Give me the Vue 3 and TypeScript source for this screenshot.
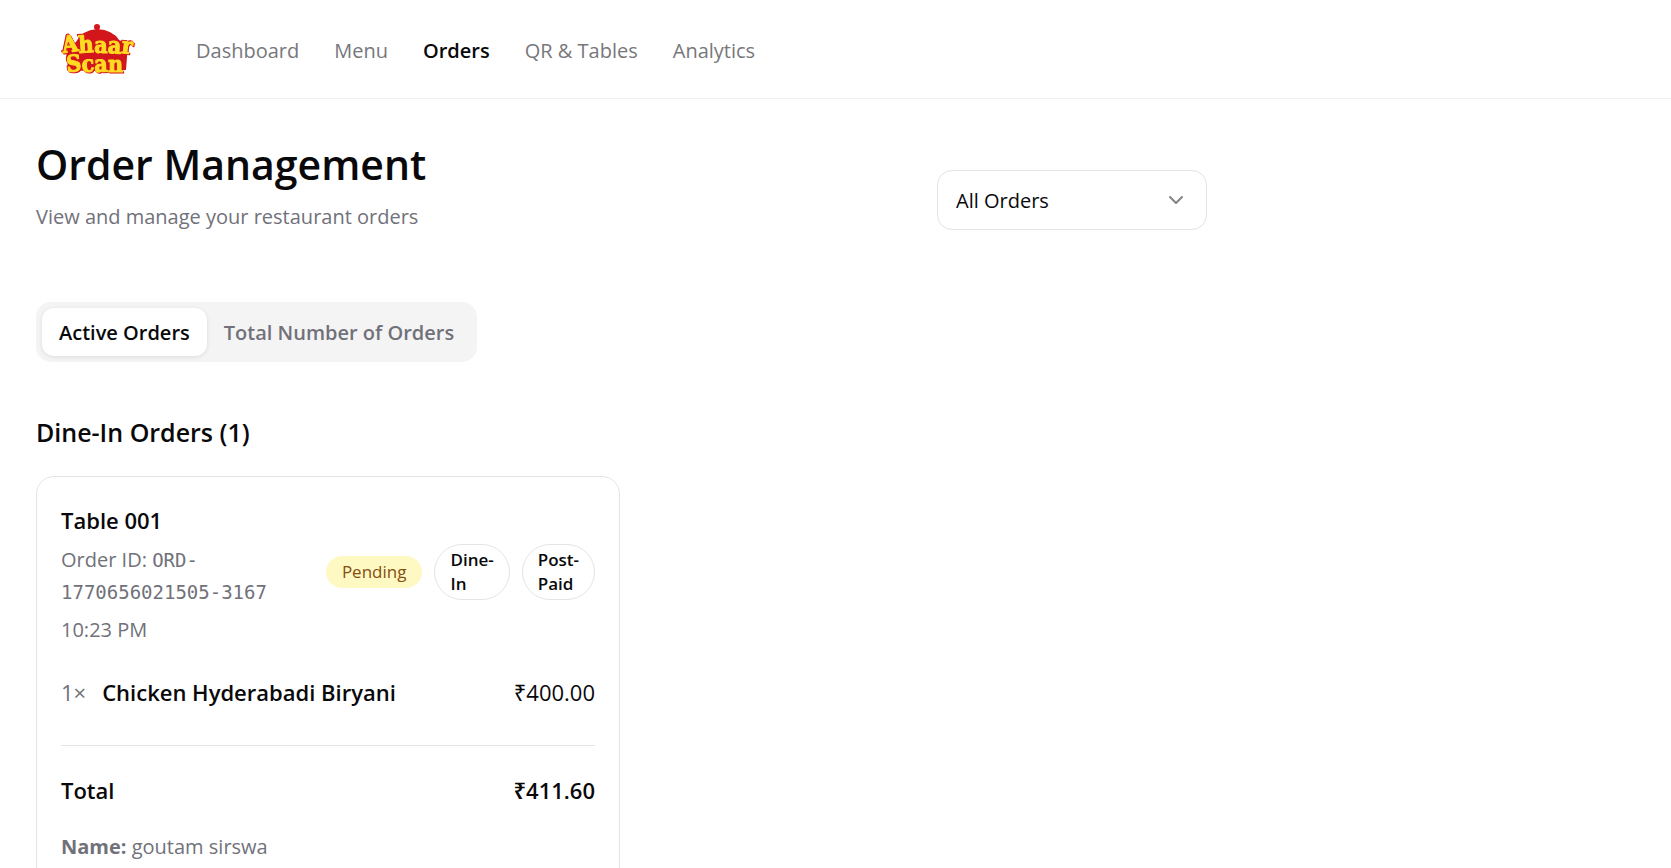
<script setup lang="ts">
import { ref } from 'vue'

interface NavItem {
  label: string
  href: string
}

interface OrderLine {
  quantity: number
  name: string
  price: number
}

const navItems: NavItem[] = [
  { label: 'Dashboard', href: '#dashboard' },
  { label: 'Menu', href: '#menu' },
  { label: 'Orders', href: '#orders' },
  { label: 'QR & Tables', href: '#tables' },
  { label: 'Analytics', href: '#analytics' },
]
const currentPage = 'Orders'

const tabs: string[] = ['Active Orders', 'Total Number of Orders']
const activeTab = ref(tabs[0])

const filters: string[] = ['All Orders', 'Dine-In', 'Takeaway']
const filter = ref(filters[0])

const order = {
  table: 'Table 001',
  id: 'ORD-1770656021505-3167',
  time: '10:23 PM',
  status: 'Pending',
  tags: ['Dine-In', 'Post-Paid'],
  lines: [{ quantity: 1, name: 'Chicken Hyderabadi Biryani', price: 400 }] as OrderLine[],
  total: 411.6,
  customer: 'goutam sirswa',
}

const rupees = (amount: number): string => `₹${amount.toFixed(2)}`
</script>

<template>
  <div class="page">
    <header class="topbar">
      <a class="logo" href="#home" aria-label="Ahaar Scan">
        <svg width="78" height="54" viewBox="0 0 78 54">
          <circle cx="39" cy="5" r="3" fill="#d3161c" />
          <path d="M18 20Q24 8 39 7Q55 8 61 18L70 22L68 48Q40 50 10 48L8 28Z" fill="#d3161c" />
          <g class="logo-text">
            <text x="5" y="31" rotate="-8 -4 0 3 6">Ahaar</text>
            <text x="9" y="50" rotate="-5 -3 -2 0">Scan</text>
          </g>
        </svg>
      </a>
      <nav class="nav" aria-label="Main">
        <a
          v-for="item in navItems"
          :key="item.label"
          :href="item.href"
          :class="['nav-link', { current: item.label === currentPage }]"
        >{{ item.label }}</a>
      </nav>
    </header>

    <main class="content">
      <div class="heading-row">
        <div>
          <h1 class="title">Order Management</h1>
          <p class="subtitle">View and manage your restaurant orders</p>
        </div>
        <div class="filter">
          <select v-model="filter" class="filter-select" aria-label="Filter orders">
            <option v-for="name in filters" :key="name">{{ name }}</option>
          </select>
          <svg class="chevron" width="24" height="24" viewBox="0 0 24 24" aria-hidden="true">
            <path d="m6 9 6 6 6-6" />
          </svg>
        </div>
      </div>

      <div class="tabs" role="tablist">
        <button
          v-for="tab in tabs"
          :key="tab"
          type="button"
          role="tab"
          :aria-selected="tab === activeTab"
          :class="['tab', { active: tab === activeTab }]"
          @click="activeTab = tab"
        >{{ tab }}</button>
      </div>

      <h2 class="section-title">Dine-In Orders (1)</h2>

      <div class="orders">
        <article class="card">
          <div class="card-head">
            <div class="card-info">
              <h3 class="table-name">{{ order.table }}</h3>
              <p class="meta">Order ID: <span class="order-id">{{ order.id }}</span></p>
              <p class="meta time">{{ order.time }}</p>
            </div>
            <div class="badges">
              <span class="badge pending">{{ order.status }}</span>
              <span v-for="tag in order.tags" :key="tag" class="badge outline">{{ tag }}</span>
            </div>
          </div>

          <ul class="lines">
            <li v-for="line in order.lines" :key="line.name" class="line">
              <span class="quantity">{{ line.quantity }}×</span>
              <span class="dish">{{ line.name }}</span>
              <span>{{ rupees(line.price) }}</span>
            </li>
          </ul>

          <div class="total">
            <span>Total</span>
            <span>{{ rupees(order.total) }}</span>
          </div>
          <p class="meta customer"><strong>Name:</strong> {{ order.customer }}</p>
        </article>
      </div>
    </main>
  </div>
</template>

<style>
body {
  margin: 0;
  background: #fff;
}
</style>

<style scoped>
.page {
  height: 100vh;
  overflow: hidden;
  color: #09090b;
  font-family: 'Open Sans', 'Noto Sans', sans-serif;
  font-size: 20px;
  line-height: 32px;
}

h1,
h2,
h3,
p,
ul {
  margin: 0;
  padding: 0;
}

.topbar {
  display: flex;
  align-items: center;
  gap: 60px;
  height: 98px;
  padding: 0 58px;
  border-bottom: 1px solid #f0f0f1;
}

.logo {
  display: flex;
}

.logo-text {
  fill: #ffdc22;
  stroke: #ffdc22;
  stroke-width: 1px;
  stroke-linejoin: round;
  font-family: 'DejaVu Serif Condensed', 'DejaVu Serif', serif;
  font-weight: 700;
  font-size: 23px;
  filter: drop-shadow(1px 1px 0 #d3161c) drop-shadow(-1px -1px 0 #d3161c);
}

.nav {
  display: flex;
  gap: 35px;
  padding-top: 4px;
}

.nav-link {
  color: #77777c;
  text-decoration: none;
}

.nav-link.current {
  color: #09090b;
  font-weight: 600;
}

.content {
  max-width: 1171px;
  padding: 38px 36px 0;
}

.heading-row {
  display: flex;
  align-items: flex-end;
  justify-content: space-between;
}

.title {
  font-size: 41px;
  line-height: 54px;
  font-weight: 600;
}

.subtitle {
  margin-top: 10px;
  color: #71717a;
}

.filter {
  display: grid;
  align-items: center;
  width: 270px;
  margin-bottom: 3px;
}

.filter-select {
  grid-area: 1 / 1;
  width: 100%;
  height: 60px;
  padding: 2px 18px 0;
  appearance: none;
  border: 1px solid #e4e4e7;
  border-radius: 15px;
  background: #fff;
  color: inherit;
  font: inherit;
}

.chevron {
  grid-area: 1 / 1;
  justify-self: end;
  margin-right: 19px;
  fill: none;
  stroke: #848488;
  stroke-width: 2;
  stroke-linecap: round;
  stroke-linejoin: round;
  pointer-events: none;
}

.tabs {
  display: inline-flex;
  margin-top: 69px;
  padding: 6px;
  border-radius: 15px;
  background: #f4f4f5;
}

.tab {
  height: 48px;
  padding: 2px 17px 0;
  border: 0;
  border-radius: 12px;
  background: none;
  color: #71717a;
  font: inherit;
  font-weight: 600;
}

.tab.active {
  background: #fff;
  color: #09090b;
  box-shadow: 0 1px 4px rgb(0 0 0 / 10%);
}

.section-title {
  margin-top: 50px;
  font-size: 25px;
  line-height: 40px;
  font-weight: 600;
}

.orders {
  display: grid;
  grid-template-columns: repeat(2, 1fr);
  gap: 3px;
  margin-top: 24px;
}

.card {
  padding: 25px 24px;
  border: 1px solid #e4e4e7;
  border-radius: 18px;
}

.card-head {
  display: flex;
  align-items: center;
  justify-content: space-between;
  gap: 12px;
}

.card-info {
  flex: 1;
}

.table-name {
  margin-bottom: 6px;
  font-size: 22px;
  line-height: 36px;
  font-weight: 600;
}

.meta {
  color: #71717a;
}

.order-id {
  font-family: 'DejaVu Sans Mono', monospace;
  font-size: 19px;
}

.time {
  margin-top: 6px;
}

.badges {
  display: flex;
  align-items: center;
  gap: 12px;
  padding-bottom: 4px;
}

.badge {
  padding: 4px 16px;
  border-radius: 28px;
  font-size: 17px;
  line-height: 24px;
}

.pending {
  background: #fef9c3;
  color: #854d0e;
}

.outline {
  width: min-content;
  padding: 3px 15px;
  border: 1px solid #e4e4e7;
  font-weight: 600;
}

.lines {
  margin-top: 28px;
  list-style: none;
}

.line {
  display: flex;
  font-size: 22px;
  line-height: 36px;
}

.quantity {
  margin-right: 16px;
  color: #71717a;
}

.dish {
  flex: 1;
  font-weight: 600;
}

.total {
  display: flex;
  justify-content: space-between;
  margin-top: 35px;
  padding-top: 26px;
  border-top: 1px solid #e4e4e7;
  font-size: 22px;
  line-height: 36px;
  font-weight: 600;
}

.customer {
  margin-top: 23px;
}
</style>
